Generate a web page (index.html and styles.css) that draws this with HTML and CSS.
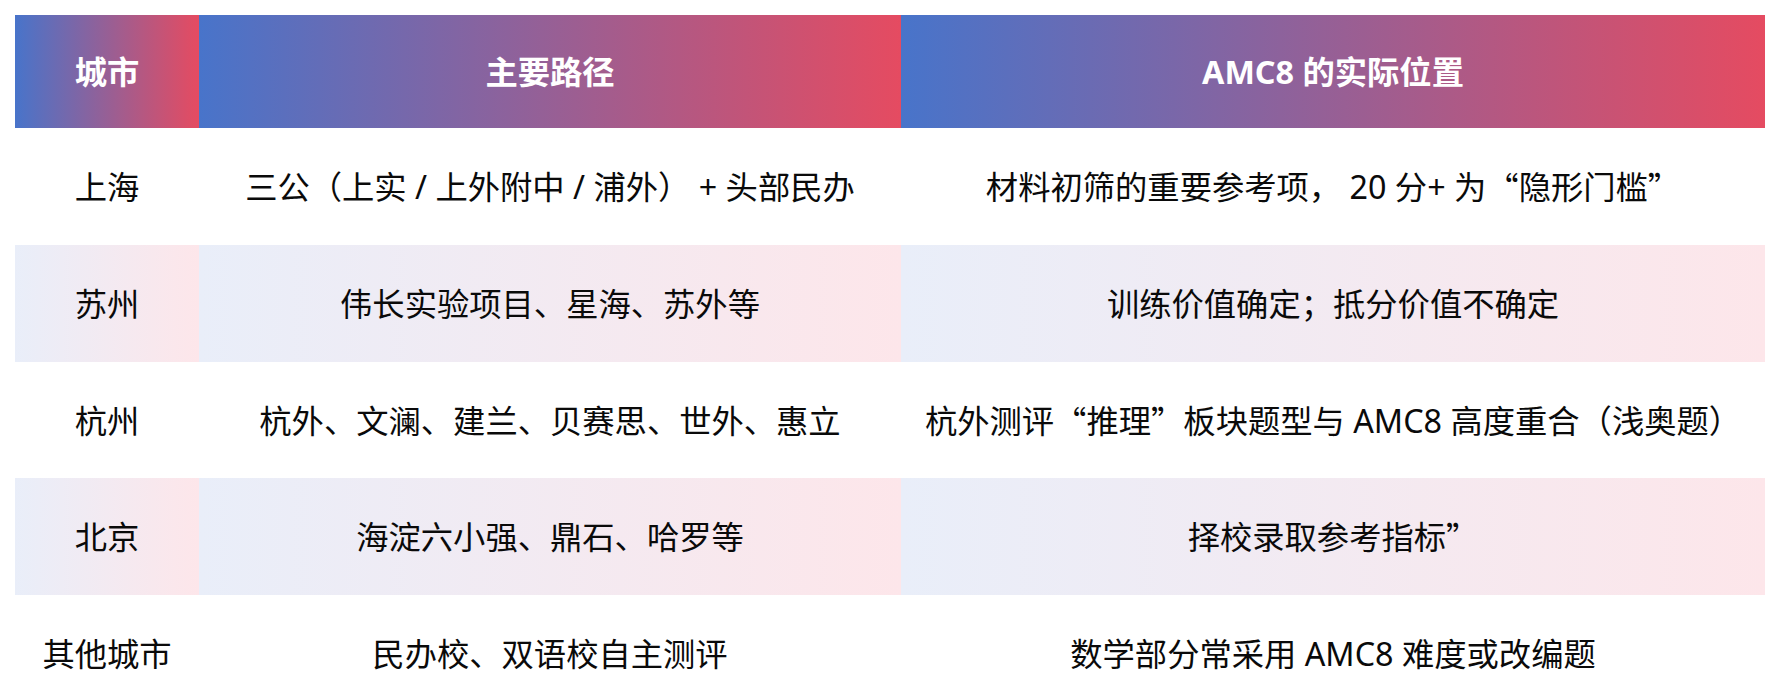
FILE: index.html
```html
<!DOCTYPE html>
<html lang="zh-CN">
<head>
<meta charset="utf-8">
<title>AMC8</title>
<link rel="stylesheet" href="styles.css">
</head>
<body>
<div class="table">
  <div class="cell head">城市</div>
  <div class="cell head">主要路径</div>
  <div class="cell head">AMC8 的实际位置</div>

  <div class="cell">上海</div>
  <div class="cell">三公（上实 / 上外附中 / 浦外） + 头部民办</div>
  <div class="cell">材料初筛的重要参考项， 20 分+ 为<span class="q">“</span>隐形门槛<span class="q">”</span></div>

  <div class="cell alt">苏州</div>
  <div class="cell alt">伟长实验项目、星海、苏外等</div>
  <div class="cell alt">训练价值确定；抵分价值不确定</div>

  <div class="cell">杭州</div>
  <div class="cell">杭外、文澜、建兰、贝赛思、世外、惠立</div>
  <div class="cell">杭外测评<span class="q">“</span>推理<span class="q">”</span>板块题型与 AMC8 高度重合（浅奥题）</div>

  <div class="cell alt">北京</div>
  <div class="cell alt">海淀六小强、鼎石、哈罗等</div>
  <div class="cell alt">择校录取参考指标<span class="q">”</span></div>

  <div class="cell">其他城市</div>
  <div class="cell">民办校、双语校自主测评</div>
  <div class="cell">数学部分常采用 AMC8 难度或改编题</div>
</div>
</body>
</html>
```

FILE: styles.css
```css
html, body {
  margin: 0;
  padding: 0;
  background: #ffffff;
}
body {
  padding: 15px;
  font-family: "Noto Sans", "Noto Sans CJK SC", sans-serif;
  color: #0a0a0a;
}
.table {
  display: grid;
  grid-template-columns: 184px 702px 864px;
  grid-template-rows: 113px repeat(5, 116.75px);
  width: 1750px;
}
.cell {
  display: flex;
  align-items: center;
  justify-content: center;
  font-size: 32.3px;
  line-height: 1;
  white-space: pre;
}
.q {
  font-family: "Noto Sans CJK SC", sans-serif;
}
.head {
  color: #ffffff;
  font-weight: 700;
  background: linear-gradient(to right, #4874ca, #e54b61);
}
.alt {
  background: linear-gradient(to right, #e9eef9, #fde6ea);
}
```
